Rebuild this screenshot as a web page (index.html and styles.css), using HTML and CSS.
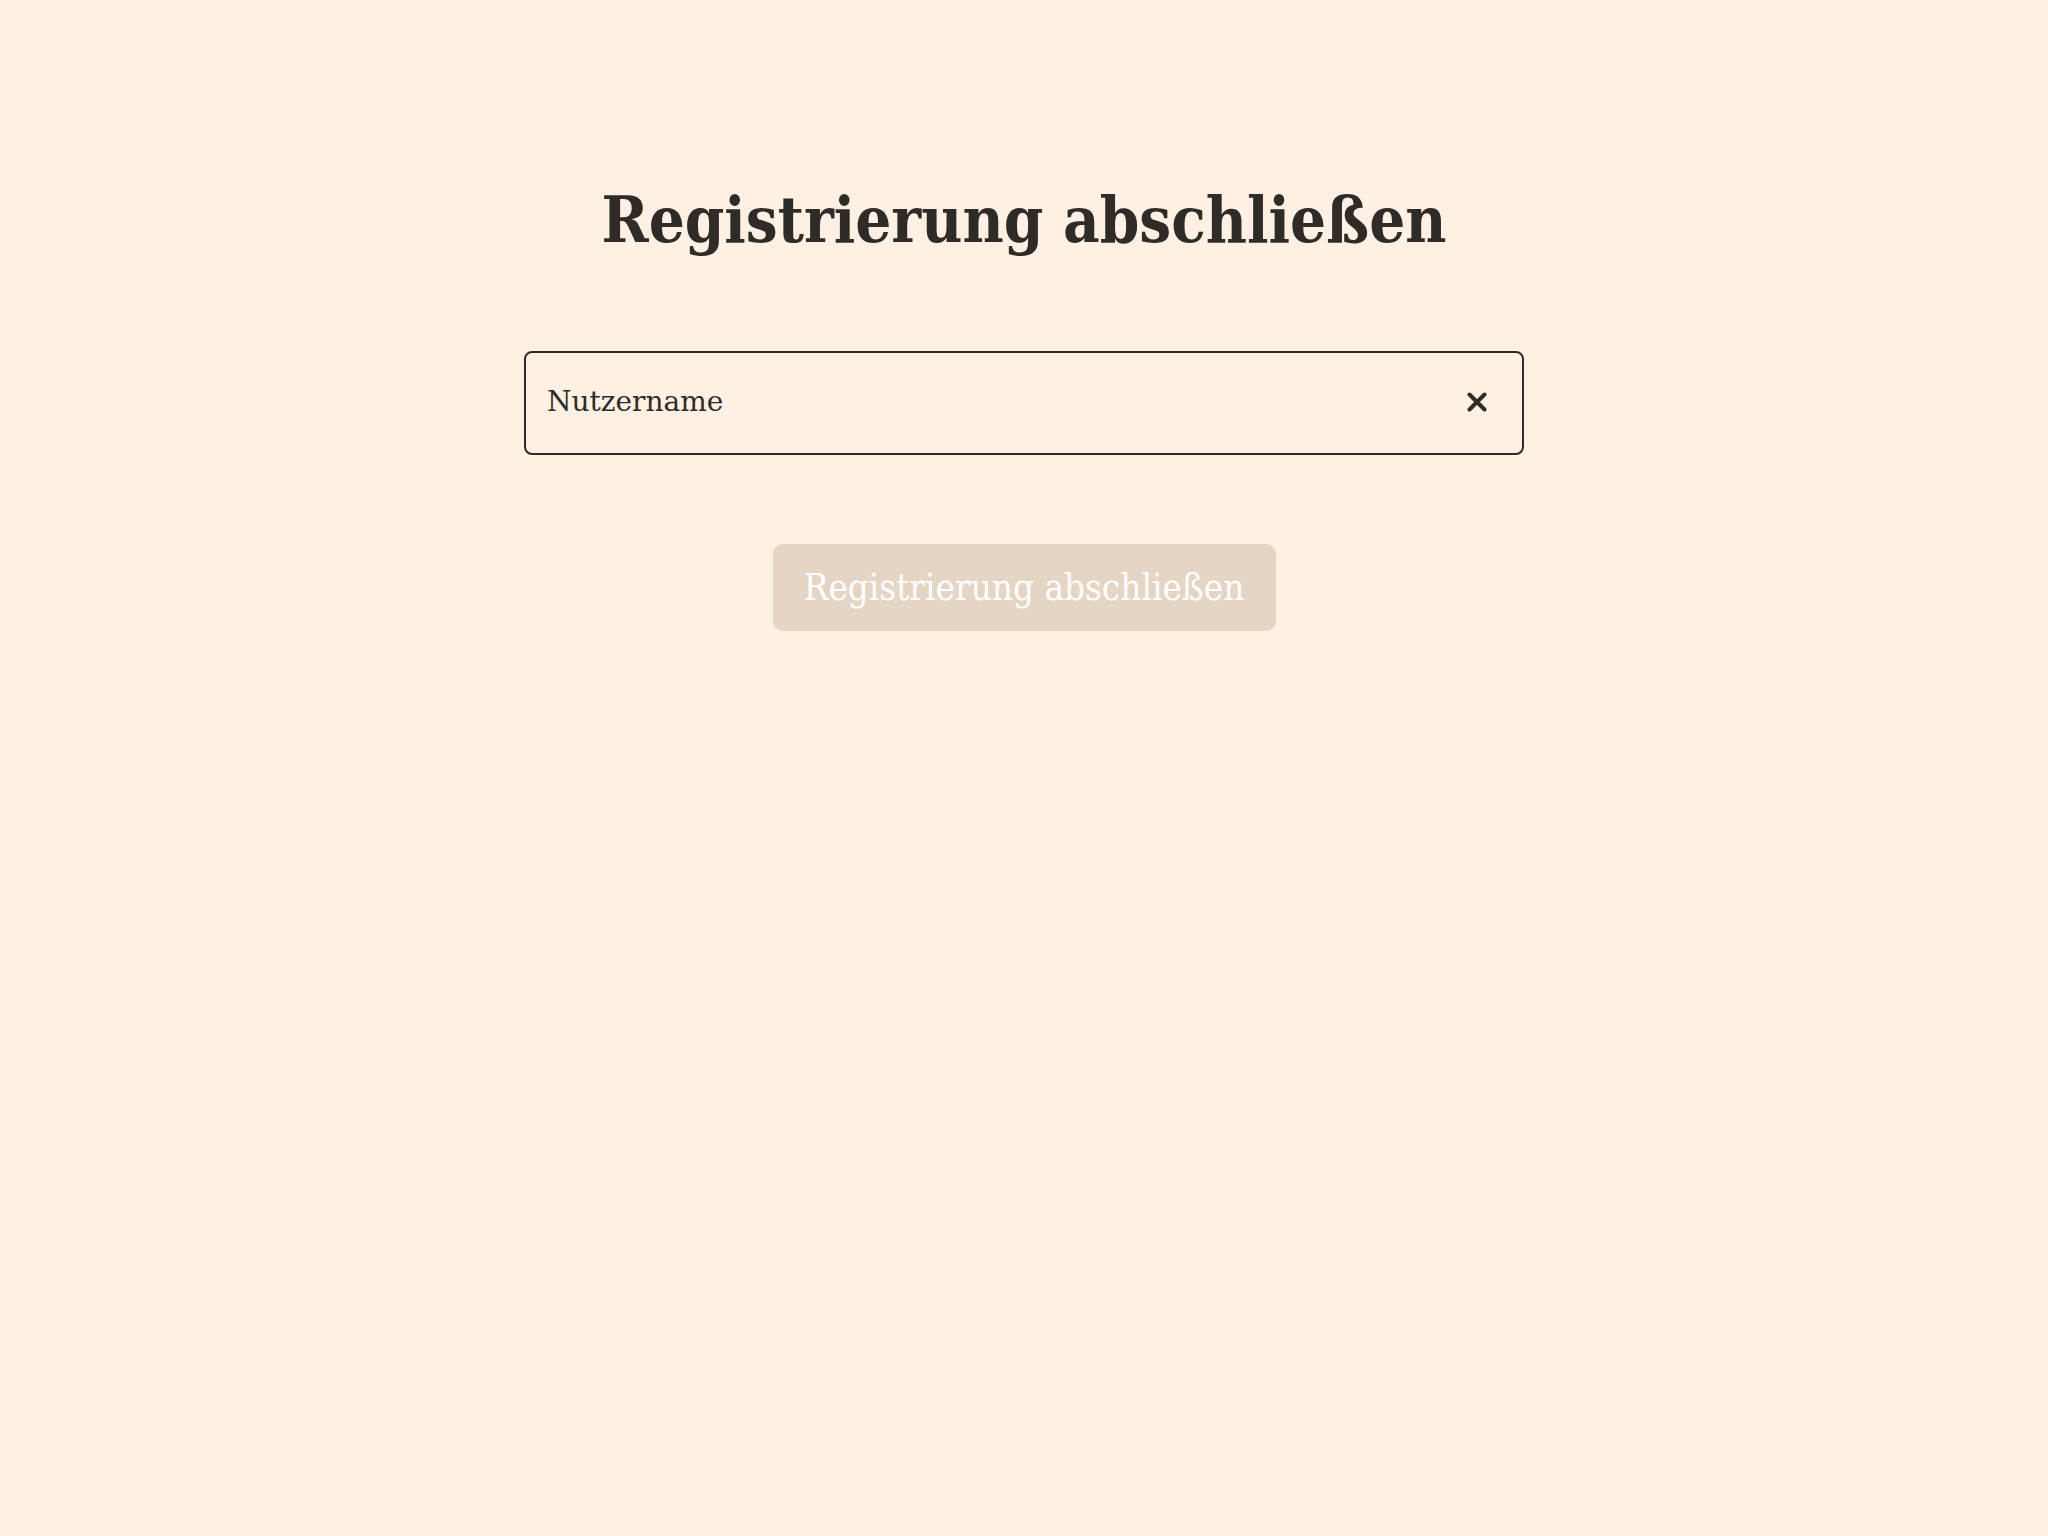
FILE: index.html
```html
<!DOCTYPE html>
<html lang="de">
<head>
<meta charset="utf-8">
<title>Registrierung abschließen</title>
<link rel="stylesheet" href="styles.css">
</head>
<body>
<main class="page">
  <h1 class="title">Registrierung abschließen</h1>
  <form class="form">
    <label class="field">
      <input class="field-input" type="text" placeholder="Nutzername">
      <span class="clear" aria-label="Löschen">
        <svg width="20" height="20" viewBox="0 0 20 20" aria-hidden="true">
          <path d="M2.5 2.5 L17.5 17.5 M17.5 2.5 L2.5 17.5" stroke="#2f2b26" stroke-width="4" stroke-linecap="round" fill="none"/>
        </svg>
      </span>
    </label>
    <button class="submit" type="button" disabled>Registrierung abschließen</button>
  </form>
</main>
</body>
</html>
```

FILE: styles.css
```css
html, body {
  margin: 0;
  padding: 0;
  background: #fef0e3;
  color: #2f2b26;
  font-family: "DejaVu Serif", "Liberation Serif", serif;
}

.page {
  min-height: 1536px;
  display: flex;
  flex-direction: column;
  align-items: center;
  padding-top: 183px;
  box-sizing: border-box;
}

.title {
  margin: 0;
  font-family: "DejaVu Serif Condensed", "DejaVu Serif", serif;
  font-stretch: condensed;
  font-size: 63px;
  font-weight: 700;
  line-height: 1.2;
}

.form {
  display: flex;
  flex-direction: column;
  align-items: center;
  margin-top: 92px;
}

.field {
  width: 1000px;
  height: 104px;
  box-sizing: border-box;
  border: 2px solid #2f2b26;
  border-radius: 8px;
  display: flex;
  align-items: center;
  padding: 0 35px 2px 21px;
}

.field-input {
  flex: 1;
  border: none;
  background: transparent;
  outline: none;
  font-family: inherit;
  font-size: 28px;
  color: #2f2b26;
  padding: 0;
}

.field-input::placeholder {
  color: #2f2b26;
  opacity: 1;
}

.clear {
  display: flex;
  width: 20px;
  height: 20px;
}

.submit {
  margin-top: 89px;
  width: 503px;
  height: 87px;
  border: none;
  border-radius: 10px;
  background: #e5d5c4;
  color: #ffffff;
  font-family: "DejaVu Serif Condensed", "DejaVu Serif", serif;
  font-stretch: condensed;
  font-size: 36.5px;
  padding: 0;
}
```
